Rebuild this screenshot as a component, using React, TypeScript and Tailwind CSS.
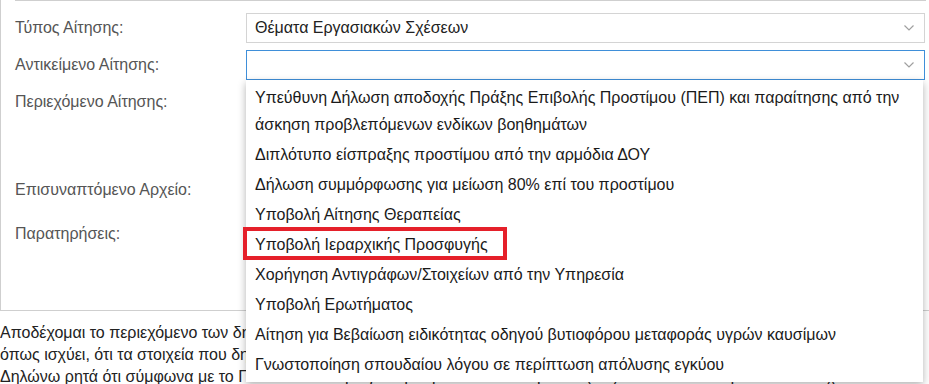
import React from 'react';

const Chevron: React.FC = () => (
  <svg width="10" height="6" viewBox="0 0 10 6" className="shrink-0">
    <polyline points="0.5,0.5 5,5 9.5,0.5" fill="none" stroke="#a0a0a0" strokeWidth="1.2" />
  </svg>
);

const options: React.ReactNode[] = [
  <>
    Υπεύθυνη Δήλωση αποδοχής Πράξης Επιβολής Προστίμου (ΠΕΠ) και παραίτησης από την
    <br />
    άσκηση προβλεπόμενων ενδίκων βοηθημάτων
  </>,
  'Διπλότυπο είσπραξης προστίμου από την αρμόδια ΔΟΥ',
  'Δήλωση συμμόρφωσης για μείωση 80% επί του προστίμου',
  'Υποβολή Αίτησης Θεραπείας',
  'Υποβολή Ιεραρχικής Προσφυγής',
  'Χορήγηση Αντιγράφων/Στοιχείων από την Υπηρεσία',
  'Υποβολή Ερωτήματος',
  'Αίτηση για Βεβαίωση ειδικότητας οδηγού βυτιοφόρου μεταφοράς υγρών καυσίμων',
  'Γνωστοποίηση σπουδαίου λόγου σε περίπτωση απόλυσης εγκύου',
];

export default function App() {
  return (
    <div
      className="relative w-[929px] h-[384px] overflow-hidden bg-white text-[16px]"
      style={{ fontFamily: '"Liberation Sans", Arial, sans-serif' }}
    >
      {/* form panel */}
      <div className="w-[940px] h-[311px] border-l border-b border-[#cfcfcf] flex flex-col">
        <div className="ml-[14px] w-[911px] border-t border-[#cfcfcf]" />
        <div className="flex mt-[12px] h-[30px]">
          <div className="w-[245px] pl-[14px] leading-[30px] text-[#555]">Τύπος Αίτησης:</div>
          <div className="w-[679px] h-[30px] border border-[#d4d4d4] flex items-center justify-between pl-[8px] pr-[10px] text-[#222]">
            <span>Θέματα Εργασιακών Σχέσεων</span>
            <Chevron />
          </div>
        </div>
        <div className="flex mt-[7px] h-[30px]">
          <div className="w-[245px] pl-[14px] leading-[30px] text-[#555]">Αντικείμενο Αίτησης:</div>
          <div className="w-[679px] h-[30px] border border-[#3f8fd9] flex items-center justify-end pr-[10px]">
            <Chevron />
          </div>
        </div>
        <div className="flex mt-[8px] h-[88px]">
          <div className="w-[245px] pl-[14px] leading-[28px] text-[#555]">Περιεχόμενο Αίτησης:</div>
        </div>
        <div className="flex h-[44px]">
          <div className="w-[245px] pl-[14px] leading-[28px] text-[#555]">Επισυναπτόμενο Αρχείο:</div>
        </div>
        <div className="flex h-[44px]">
          <div className="w-[245px] pl-[14px] leading-[28px] text-[#555]">Παρατηρήσεις:</div>
        </div>
      </div>

      {/* declaration text */}
      <div className="mt-[11px] leading-[22px] text-[#222] whitespace-nowrap">
        <div>
          Αποδέχομαι το περιεχόμενο των δηλώσεων και γνωρίζοντας τις συνέπειες του νόμου 1599/1986 δηλώνω ότι το περιεχόμενο είναι
        </div>
        <div>όπως ισχύει, ότι τα στοιχεία που δηλώνω είναι αληθή και ακριβή.</div>
        <div>
          Δηλώνω ρητά ότι σύμφωνα με το Γενικό Κανονισμό για την Προστασία Δεδομένων (ΕΕ) 2016/679 και την εκάστοτε ισχύουσα
        </div>
      </div>

      {/* open dropdown list */}
      <div className="absolute left-[246px] top-[80px] w-[677px] bg-white pt-[2px] pb-[3px] shadow-[0_3px_8px_rgba(0,0,0,0.3)] text-[#1a1a1a]">
        {options.map((opt, i) => (
          <div key={i} className="pl-[9px] py-[1.5px] leading-[27px] whitespace-nowrap">
            {opt}
          </div>
        ))}
      </div>

      {/* highlight annotation */}
      <div className="absolute left-[243px] top-[227px] w-[264px] h-[33px] border-[4px] border-[#e5202a]" />
    </div>
  );
}
